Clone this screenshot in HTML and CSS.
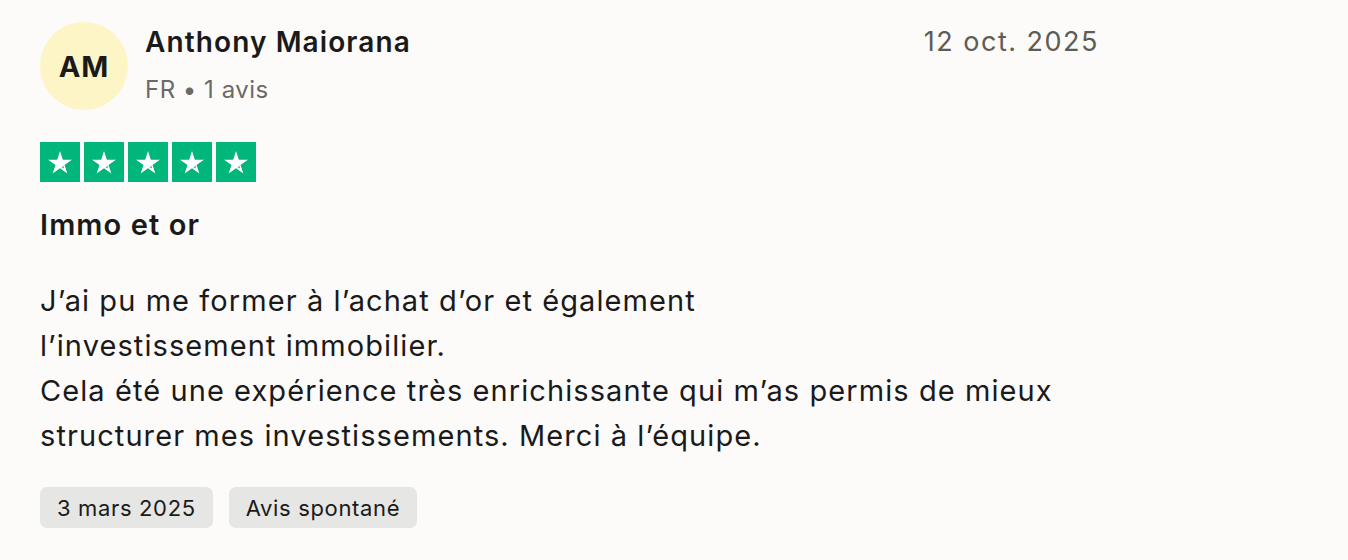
FILE: index.html
```html
<!DOCTYPE html>
<html lang="fr">
<head>
<meta charset="utf-8">
<title>Avis</title>
<link rel="stylesheet" href="styles.css">
</head>
<body>
<article class="review">
  <header class="review-head">
    <div class="avatar">AM</div>
    <div class="who">
      <div class="name">Anthony Maiorana</div>
      <div class="meta">FR • 1 avis</div>
    </div>
    <time class="date">12 oct. 2025</time>
  </header>
  <div class="stars">
    <span class="star"><svg viewBox="0 0 24 24"><path d="M12 3.2l2.25 6.9h7.25l-5.87 4.27 2.24 6.9L12 16.99l-5.87 4.28 2.24-6.9L2.5 10.1h7.25z" fill="#fff"/><path d="M14.6 17.1l-1.2-0.9 1.9-1.3z" fill="#00b67a"/></svg></span>
    <span class="star"><svg viewBox="0 0 24 24"><path d="M12 3.2l2.25 6.9h7.25l-5.87 4.27 2.24 6.9L12 16.99l-5.87 4.28 2.24-6.9L2.5 10.1h7.25z" fill="#fff"/><path d="M14.6 17.1l-1.2-0.9 1.9-1.3z" fill="#00b67a"/></svg></span>
    <span class="star"><svg viewBox="0 0 24 24"><path d="M12 3.2l2.25 6.9h7.25l-5.87 4.27 2.24 6.9L12 16.99l-5.87 4.28 2.24-6.9L2.5 10.1h7.25z" fill="#fff"/><path d="M14.6 17.1l-1.2-0.9 1.9-1.3z" fill="#00b67a"/></svg></span>
    <span class="star"><svg viewBox="0 0 24 24"><path d="M12 3.2l2.25 6.9h7.25l-5.87 4.27 2.24 6.9L12 16.99l-5.87 4.28 2.24-6.9L2.5 10.1h7.25z" fill="#fff"/><path d="M14.6 17.1l-1.2-0.9 1.9-1.3z" fill="#00b67a"/></svg></span>
    <span class="star"><svg viewBox="0 0 24 24"><path d="M12 3.2l2.25 6.9h7.25l-5.87 4.27 2.24 6.9L12 16.99l-5.87 4.28 2.24-6.9L2.5 10.1h7.25z" fill="#fff"/><path d="M14.6 17.1l-1.2-0.9 1.9-1.3z" fill="#00b67a"/></svg></span>
  </div>
  <h2 class="title">Immo et or</h2>
  <p class="text">J’ai pu me former à l’achat d’or et également<br>l’investissement immobilier.<br>Cela été une expérience très enrichissante qui m’as permis de mieux<br>structurer mes investissements. Merci à l’équipe.</p>
  <div class="tags">
    <span class="tag">3 mars 2025</span>
    <span class="tag">Avis spontané</span>
  </div>
</article>
</body>
</html>
```
FILE: styles.css
```css
html, body {
  margin: 0;
  padding: 0;
  background: #fcfbf9;
}
body {
  font-family: Inter, "Liberation Sans", Arial, sans-serif;
  color: #1a1a1a;
}
.review {
  width: 1058px;
  padding: 22px 40px 0;
}
.review-head {
  display: flex;
  align-items: flex-start;
}
.avatar {
  width: 88px;
  height: 88px;
  border-radius: 50%;
  background: #fef5c6;
  display: flex;
  align-items: center;
  justify-content: center;
  font-weight: 700;
  font-size: 29px;
  letter-spacing: 1px;
  color: #1a1a1a;
  flex-shrink: 0;
}
.who {
  margin-left: 17px;
  flex: 1;
}
.name {
  font-size: 28px;
  font-weight: 600;
  line-height: 40px;
  letter-spacing: 1.1px;
}
.meta {
  margin-top: 10px;
  font-size: 24px;
  line-height: 36px;
  color: #6b6a66;
  letter-spacing: 0.5px;
}
.date {
  font-size: 27px;
  line-height: 40px;
  color: #5e5c57;
  letter-spacing: 1.5px;
  margin-right: -1px;
}
.stars {
  display: flex;
  gap: 4px;
  margin-top: 32px;
}
.star {
  width: 40px;
  height: 40px;
  background: #00b67a;
  display: flex;
  align-items: center;
  justify-content: center;
}
.star svg {
  width: 30px;
  height: 30px;
}
.title {
  margin: 24px 0 0;
  font-size: 29px;
  font-weight: 600;
  line-height: 38px;
  letter-spacing: 1.1px;
}
.text {
  margin: 34px 0 0;
  font-size: 29px;
  line-height: 45px;
  letter-spacing: 1.08px;
}
.tags {
  display: flex;
  gap: 16px;
  margin-top: 29px;
}
.tag {
  background: #e6e6e4;
  border-radius: 7px;
  height: 41px;
  padding: 0 17px;
  display: flex;
  align-items: center;
  font-size: 22px;
  letter-spacing: 0.65px;
  color: #1a1a1a;
}
```
